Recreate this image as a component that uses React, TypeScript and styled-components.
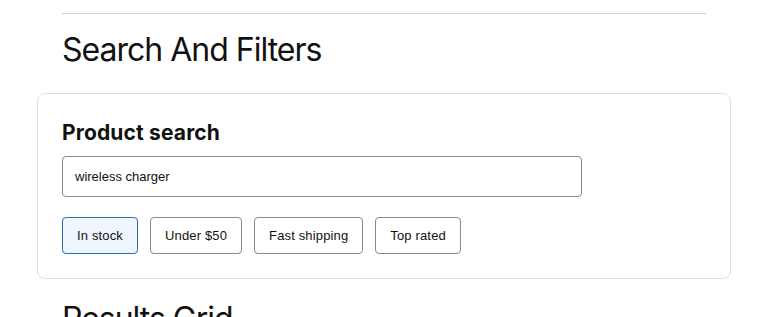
import React, { useState } from "react";
import styled, { createGlobalStyle } from "styled-components";

const Global = createGlobalStyle`
  html, body { margin: 0; padding: 0; background: #fff; }
  body { font-family: Inter, "Noto Sans", sans-serif; color: #111; }
  * { box-sizing: border-box; }
`;

const Page = styled.div`
  padding: 13px 36px 0 37px;
  display: flex;
  flex-direction: column;
`;

const Rule = styled.hr`
  margin: 0 25px;
  border: none;
  border-top: 1px solid #d4d4d4;
  height: 0;
`;

const SectionTitle = styled.h2<{ $top: number }>`
  margin: ${(p) => p.$top}px 25px 0;
  font-family: Inter, "Noto Sans", sans-serif;
  font-weight: 400;
  font-size: 32px;
  line-height: 39px;
  letter-spacing: -1px;
  color: #111;
`;

const Card = styled.section`
  margin-top: 24px;
  border: 1px solid #dedede;
  border-radius: 8px;
  padding: 27px 24px 24px;
  display: flex;
  flex-direction: column;
`;

const CardTitle = styled.h3`
  margin: 0;
  font-family: Inter, "Noto Sans", sans-serif;
  font-weight: 700;
  font-size: 21px;
  line-height: 24px;
  letter-spacing: 0.15px;
  color: #111;
`;

const SearchInput = styled.input`
  margin-top: 11px;
  width: 520px;
  height: 41px;
  border: 1px solid #8a8a8a;
  border-radius: 4px;
  padding: 0 12px;
  font-family: "Liberation Sans", Arial, sans-serif;
  font-size: 13px;
  color: #111;
  outline: none;
`;

const FilterRow = styled.div`
  margin-top: 20px;
  display: flex;
  gap: 12px;
`;

const Chip = styled.button<{ $active: boolean }>`
  height: 37px;
  padding: 0 14px;
  border-radius: 4px;
  border: 1px solid ${(p) => (p.$active ? "#2d6db4" : "#8a8a8a")};
  background: ${(p) => (p.$active ? "#eef5fd" : "#fff")};
  font-family: "Liberation Sans", Arial, sans-serif;
  font-size: 13px;
  letter-spacing: 0.15px;
  color: #111;
  cursor: pointer;
`;

const filters = ["In stock", "Under $50", "Fast shipping", "Top rated"];

export default function App() {
  const [active, setActive] = useState<string[]>(["In stock"]);
  const toggle = (f: string) =>
    setActive((a) => (a.includes(f) ? a.filter((x) => x !== f) : [...a, f]));
  return (
    <Page>
      <Global />
      <Rule />
      <SectionTitle $top={16}>Search And Filters</SectionTitle>
      <Card>
        <CardTitle>Product search</CardTitle>
        <SearchInput defaultValue="wireless charger" />
        <FilterRow>
          {filters.map((f) => (
            <Chip key={f} $active={active.includes(f)} onClick={() => toggle(f)}>
              {f}
            </Chip>
          ))}
        </FilterRow>
      </Card>
      <SectionTitle $top={20}>Results Grid</SectionTitle>
    </Page>
  );
}
